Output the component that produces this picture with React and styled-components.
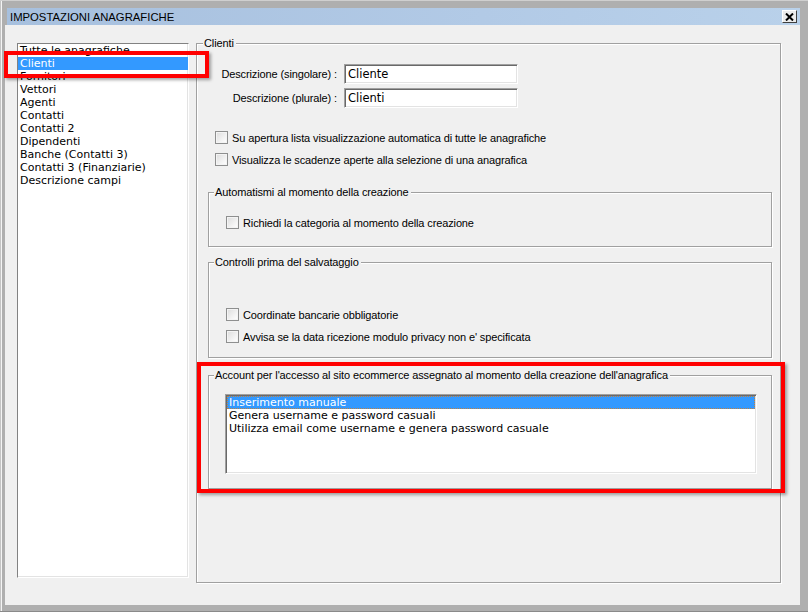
import styled, { createGlobalStyle } from "styled-components";

const GlobalStyle = createGlobalStyle`
  html, body {
    margin: 0;
    padding: 0;
  }
  body {
    width: 808px;
    height: 612px;
    overflow: hidden;
    background: #afafaf;
  }
`;

const Frame = styled.div`
  position: relative;
  width: 808px;
  height: 612px;
  box-sizing: border-box;
  background: #afafaf;
  border-top: 1px solid #cfcfcf;
  border-bottom: 1px solid #8a8a8a;
  padding: 7px 8px 6px 5px;
  display: flex;
  flex-direction: column;
  font-family: "Liberation Sans", Arial, sans-serif;
  font-size: 11px;
  letter-spacing: -0.12px;
  color: #000;
  box-shadow: inset 1px 0 0 #c4c4c4, inset 2px 0 0 #f4f4f4;
`;

const TitleBar = styled.div`
  height: 17px;
  margin-left: 2px;
  padding: 0 3px;
  display: flex;
  align-items: center;
  justify-content: space-between;
  background: linear-gradient(to right, #a7c0de, #b2cae6 60%, #b9d1ea);
`;

const Title = styled.span`
  font-size: 11.3px;
  letter-spacing: 0;
`;

const CloseButton = styled.div`
  width: 15px;
  height: 13px;
  box-sizing: border-box;
  border: 1px solid;
  border-color: #ffffff #404040 #404040 #ffffff;
  background: #ececec;
  display: flex;
  align-items: center;
  justify-content: center;
`;

const Body = styled.div`
  flex: 1;
  background: #f0f0f0;
  display: flex;
  align-items: flex-start;
  gap: 7px;
  padding: 0 19px 0 12px;
`;

const SideList = styled.div`
  width: 172px;
  height: 535px;
  margin-top: 18px;
  box-sizing: border-box;
  background: #fff;
  border: 1px solid;
  border-color: #828282 #ffffff #ffffff #828282;
  box-shadow: inset -1px -1px 0 #e3e3e3;
`;

const ListItem = styled.div`
  height: 13px;
  line-height: 13px;
  padding-left: 2px;
  font-family: "DejaVu Sans", Verdana, sans-serif;
  font-size: 11px;
  letter-spacing: 0;
  white-space: nowrap;
  background: ${(p) => (p.$selected ? "#3399ff" : "transparent")};
  color: ${(p) => (p.$selected ? "#fff" : "#000")};
  outline: ${(p) => (p.$focus ? "1px dotted #c08040" : "none")};
  outline-offset: -1px;
`;

const GroupBox = styled.div`
  position: relative;
  box-sizing: border-box;
  border: 1px solid #a0a0a0;
  box-shadow: 1px 1px 0 #ffffff, inset 1px 1px 0 #ffffff;
`;

const MainGroup = styled(GroupBox)`
  flex: 1;
  height: 540px;
  margin-top: 18px;
`;

const SubGroup = styled(GroupBox)`
  margin: ${(p) => p.$top}px 8px 0 11px;
  padding: ${(p) => p.$pad};
`;

const Caption = styled.span`
  position: absolute;
  top: -7px;
  left: ${(p) => p.$left || 5}px;
  padding: 0 2px 0 1px;
  line-height: 13px;
  background: #f0f0f0;
  white-space: nowrap;
`;

const FormRows = styled.div`
  margin-top: 20px;
  display: flex;
  flex-direction: column;
  gap: 4px;
`;

const FieldRow = styled.div`
  display: flex;
  align-items: center;
  gap: 7px;
  height: 20px;
`;

const FieldLabel = styled.label`
  width: 140px;
  text-align: right;
  white-space: nowrap;
`;

const TextInput = styled.input`
  width: 174px;
  height: 20px;
  box-sizing: border-box;
  margin: 0;
  padding: 0 0 0 3px;
  border: 1px solid;
  border-color: #a0a0a0 #ffffff #ffffff #a0a0a0;
  box-shadow: inset 1px 1px 0 #696969, inset -1px -1px 0 #e3e3e3;
  background: #fff;
  font-family: "DejaVu Sans", Verdana, sans-serif;
  font-size: 11.5px;
  color: #000;
  outline: none;
`;

const Options = styled.div`
  display: flex;
  flex-direction: column;
  gap: 9px;
  margin: ${(p) => p.$top || 0}px 0 0 ${(p) => p.$left || 0}px;
`;

const CheckRow = styled.div`
  display: flex;
  align-items: center;
  gap: 4px;
  height: 13px;
  line-height: 12px;
  white-space: nowrap;
`;

const CheckBox = styled.span`
  width: 13px;
  height: 13px;
  box-sizing: border-box;
  flex: none;
  border: 1px solid #8e8f8f;
  background: linear-gradient(135deg, #dcdcdc, #f6f6f6 70%, #ffffff);
  box-shadow: inset 0 0 0 1px #f4f4f4;
`;

const ChoiceList = styled.div`
  height: 80px;
  box-sizing: border-box;
  background: #fff;
  border: 1px solid;
  border-color: #a0a0a0 #ffffff #ffffff #a0a0a0;
  box-shadow: inset 1px 1px 0 #696969, inset -1px -1px 0 #e3e3e3;
  padding: 1px 1px 0 1px;
`;

const Highlight = styled.div`
  position: absolute;
  left: ${(p) => p.$x}px;
  top: ${(p) => p.$y}px;
  width: ${(p) => p.$w}px;
  height: ${(p) => p.$h}px;
  box-sizing: border-box;
  border: 4px solid #ff0000;
  box-shadow: 2px 2px 3px rgba(0, 0, 0, 0.35);
  pointer-events: none;
`;

const categories = [
  "Tutte le anagrafiche",
  "Clienti",
  "Fornitori",
  "Vettori",
  "Agenti",
  "Contatti",
  "Contatti 2",
  "Dipendenti",
  "Banche (Contatti 3)",
  "Contatti 3 (Finanziarie)",
  "Descrizione campi",
];

const accountModes = [
  "Inserimento manuale",
  "Genera username e password casuali",
  "Utilizza email come username e genera password casuale",
];

const Check = ({ children }) => (
  <CheckRow>
    <CheckBox />
    <span>{children}</span>
  </CheckRow>
);

export default function App() {
  return (
    <>
      <GlobalStyle />
      <Frame>
        <TitleBar>
          <Title>IMPOSTAZIONI ANAGRAFICHE</Title>
          <CloseButton>
            <svg width="9" height="8" viewBox="0 0 9 8">
              <path d="M1 0.5 L8 7.5 M8 0.5 L1 7.5" stroke="#000" strokeWidth="2" />
            </svg>
          </CloseButton>
        </TitleBar>

        <Body>
          <SideList>
            {categories.map((c) => (
              <ListItem key={c} $selected={c === "Clienti"}>
                {c}
              </ListItem>
            ))}
          </SideList>

          <MainGroup>
            <Caption $left={6}>Clienti</Caption>

            <FormRows>
              <FieldRow>
                <FieldLabel>Descrizione (singolare) :</FieldLabel>
                <TextInput readOnly defaultValue="Cliente" />
              </FieldRow>
              <FieldRow>
                <FieldLabel>Descrizione (plurale) :</FieldLabel>
                <TextInput readOnly defaultValue="Clienti" />
              </FieldRow>
            </FormRows>

            <Options $top={23} $left={18}>
              <Check>Su apertura lista visualizzazione automatica di tutte le anagrafiche</Check>
              <Check>Visualizza le scadenze aperte alla selezione di una anagrafica</Check>
            </Options>

            <SubGroup $top={26} $pad="23px 0 17px 17px">
              <Caption>Automatismi al momento della creazione</Caption>
              <Options>
                <Check>Richiedi la categoria al momento della creazione</Check>
              </Options>
            </SubGroup>

            <SubGroup $top={15} $pad="45px 0 14px 17px">
              <Caption>Controlli prima del salvataggio</Caption>
              <Options>
                <Check>Coordinate bancarie obbligatorie</Check>
                <Check>Avvisa se la data ricezione modulo privacy non e' specificata</Check>
              </Options>
            </SubGroup>

            <SubGroup $top={17} $pad="18px 14px 14px 16px">
              <Caption>
                Account per l'accesso al sito ecommerce assegnato al momento della creazione dell'anagrafica
              </Caption>
              <ChoiceList>
                {accountModes.map((m, i) => (
                  <ListItem key={m} $selected={i === 0} $focus={i === 0}>
                    {m}
                  </ListItem>
                ))}
              </ChoiceList>
            </SubGroup>
          </MainGroup>
        </Body>

        <Highlight $x={4} $y={50} $w={205} $h={27} />
        <Highlight $x={197} $y={361} $w={588} $h={131} />
      </Frame>
    </>
  );
}
